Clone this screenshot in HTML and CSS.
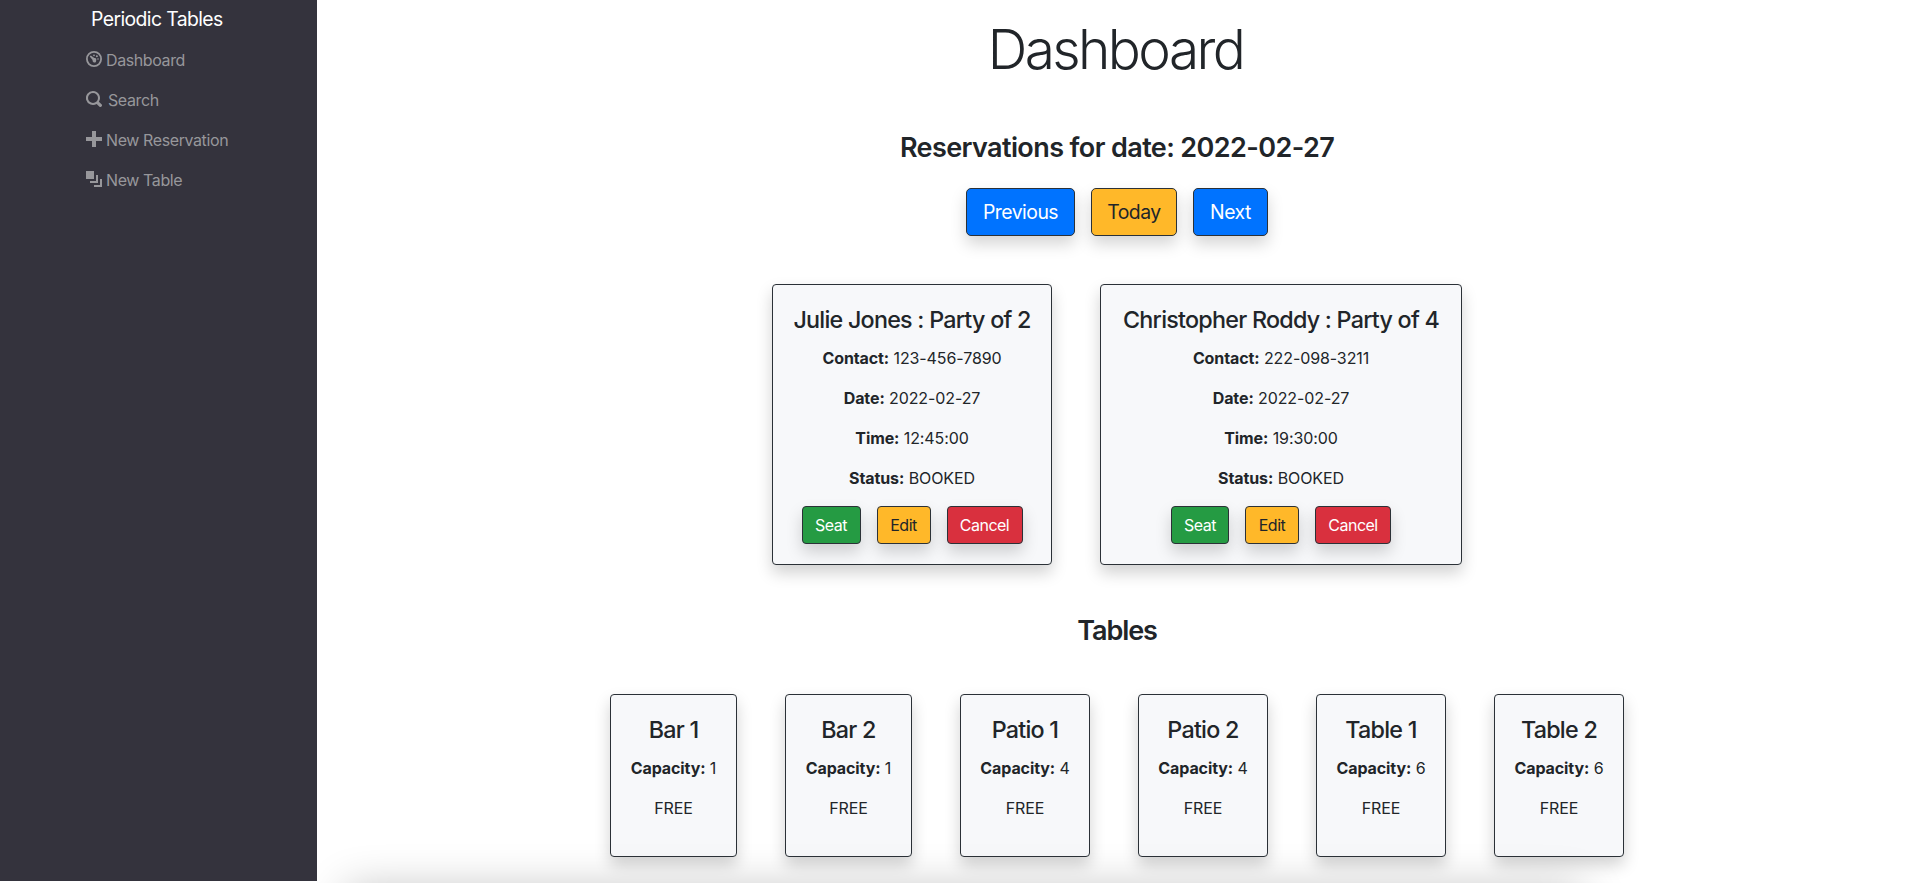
FILE: index.html
```html
<!DOCTYPE html>
<html lang="en">
<head>
<meta charset="utf-8">
<title>Periodic Tables</title>
<link rel="stylesheet" href="styles.css">
</head>
<body>
<div class="layout">
  <nav class="sidebar">
    <a class="brand"><span>Periodic Tables</span></a>
    <ul class="menu">
      <li><svg class="icon" viewBox="0 0 16 16"><path fill-rule="evenodd" d="M8 0a8 8 0 1 0 0 16A8 8 0 0 0 8 0zm0 1.800a6.200 6.200 0 1 1 0 12.400A6.200 6.200 0 0 1 8 1.800z"/><path d="M3.700 5.600 4.800 4.500l3.500 2.600c1-.3 1.900.4 2 1.300l-.3 2.300c-.5.9-1.700 1.100-2.500.6-.8-.5-1.100-1.300-.9-2.200z"/><circle cx="8" cy="4.300" r=".9"/><circle cx="10.900" cy="5.300" r="1"/><circle cx="12" cy="8" r=".8"/></svg><span class="nav-dashboard">Dashboard</span></li>
      <li><svg class="icon" viewBox="0 0 16 16"><path fill-rule="evenodd" d="M7 0a7 7 0 1 0 3.700 12.900l2.500 2.600a1.600 1.600 0 0 0 2.300-2.300l-2.600-2.500A7 7 0 0 0 7 0zm0 2a5 5 0 1 1 0 10A5 5 0 0 1 7 2z"/></svg><span class="nav-search">Search</span></li>
      <li><svg class="icon" viewBox="0 0 16 16"><path d="M6 0h4v6h6v4h-6v6H6v-6H0V6h6z"/></svg><span class="nav-reservation">New Reservation</span></li>
      <li><svg class="icon" viewBox="0 0 16 16"><path d="M0 0h8v8H0zM10 4h2v8H4v-2h6zM14 8h2v8H8v-2h6z"/></svg><span class="nav-table">New Table</span></li>
    </ul>
  </nav>
  <main class="main">
    <h1 class="title">Dashboard</h1>
    <h3 class="subtitle date-title">Reservations for date: 2022-02-27</h3>
    <div class="buttons date-buttons">
      <button class="btn large blue previous">Previous</button>
      <button class="btn large yellow today">Today</button>
      <button class="btn large blue next">Next</button>
    </div>
    <section class="cards">
      <article class="card reservation narrow">
        <h4>Julie Jones : Party of 2</h4>
        <p><b>Contact:</b> 123-456-7890</p>
        <p><b>Date:</b> 2022-02-27</p>
        <p><b>Time:</b> 12:45:00</p>
        <p><b>Status:</b> BOOKED</p>
        <div class="buttons"><button class="btn green seat">Seat</button><button class="btn yellow edit">Edit</button><button class="btn red cancel">Cancel</button></div>
      </article>
      <article class="card reservation wide">
        <h4>Christopher Roddy : Party of 4</h4>
        <p><b>Contact:</b> 222-098-3211</p>
        <p><b>Date:</b> 2022-02-27</p>
        <p><b>Time:</b> 19:30:00</p>
        <p><b>Status:</b> BOOKED</p>
        <div class="buttons"><button class="btn green seat">Seat</button><button class="btn yellow edit">Edit</button><button class="btn red cancel">Cancel</button></div>
      </article>
    </section>
    <h3 class="subtitle tables-title">Tables</h3>
    <section class="cards">
      <article class="card table bar"><h4>Bar 1</h4><p><b>Capacity:</b> 1</p><p>FREE</p></article>
      <article class="card table bar"><h4>Bar 2</h4><p><b>Capacity:</b> 1</p><p>FREE</p></article>
      <article class="card table"><h4>Patio 1</h4><p><b>Capacity:</b> 4</p><p>FREE</p></article>
      <article class="card table"><h4>Patio 2</h4><p><b>Capacity:</b> 4</p><p>FREE</p></article>
      <article class="card table"><h4>Table 1</h4><p><b>Capacity:</b> 6</p><p>FREE</p></article>
      <article class="card table"><h4>Table 2</h4><p><b>Capacity:</b> 6</p><p>FREE</p></article>
    </section>
    <div class="bottom-shade"></div>
  </main>
</div>
</body>
</html>
```
FILE: styles.css
```css
* { box-sizing: border-box; }
body {
  margin: 0;
  overflow: hidden;
  background: #fff;
  color: #212529;
  font: 400 16px/24px Inter, "Liberation Sans", sans-serif;
  letter-spacing: -0.1px;
}
h1, h3, h4, p, ul { margin: 0; padding: 0; }
.layout { display: flex; height: 883px; }
.sidebar {
  flex: none;
  width: 317px;
  height: 881px;
  padding-left: 86px;
  background: #34333d;
}
.brand {
  display: block;
  height: 40px;
  padding: 4px 0 0 5px;
  color: #fff;
  font-size: 19.4px;
  line-height: 30px;
  letter-spacing: -0.6px;
}
.menu { list-style: none; color: #97979b; letter-spacing: -0.4px; }
.menu li { display: flex; height: 40px; padding-top: 8px; white-space: nowrap; }
.icon { flex: none; width: 16px; height: 16px; margin: 3px 4px 0 0; fill: currentColor; }
.menu .nav-search { padding-left: 2px; }
.main {
  position: relative;
  flex: 1;
  height: 883px;
  padding-left: 4px;
  overflow: hidden;
  text-align: center;
}
.title {
  height: 67px;
  margin-top: 16px;
  padding-right: 3px;
  font-size: 55px;
  font-weight: 330;
  line-height: 67px;
  letter-spacing: -2.6px;
}
.subtitle {
  height: 34px;
  font-size: 27px;
  font-weight: 600;
  line-height: 34px;
  letter-spacing: -0.6px;
}
.date-title { margin-top: 48px; }
.date-buttons { margin: 23px 0 48px; }
.buttons { display: flex; justify-content: center; gap: 16px; }
.btn {
  height: 38px;
  padding: 0;
  border: 1px solid #2b3137;
  border-radius: 4px;
  font: inherit;
  letter-spacing: -0.5px;
  color: #fff;
  box-shadow: 0 8px 16px rgba(0, 0, 0, .17);
}
.large { height: 48px; font-size: 19.4px; border-radius: 5px; }
.blue { background: #0073ff; }
.yellow { background: #ffb829; color: #212529; }
.green { background: #259b43; }
.red { background: #d9303e; }
.previous { width: 109px; }
.today { width: 86px; }
.next { width: 75px; }
.seat { width: 59px; }
.wide .seat { width: 58px; }
.edit { width: 54px; }
.cancel { width: 76px; }
.cards { display: flex; justify-content: center; gap: 48px; }
.card {
  padding-top: 20px;
  border: 1px solid #2b3137;
  border-radius: 4px;
  background: #f7f8fa;
  box-shadow: 0 8px 16px rgba(0, 0, 0, .18);
  white-space: nowrap;
}
.card h4 {
  height: 29px;
  margin-bottom: 12px;
  font-size: 23.3px;
  font-weight: 550;
  line-height: 29px;
  letter-spacing: -0.75px;
}
.card p { height: 24px; margin-bottom: 16px; }
.reservation { height: 281px; }
.narrow { width: 280px; }
.wide { width: 362px; }
.tables-title { margin: 49px 0 46px; letter-spacing: -1.1px; }
.table { width: 130px; height: 163px; }
.bar { width: 127px; }
.bottom-shade {
  position: absolute;
  top: 894px;
  left: 35px;
  width: 1225px;
  height: 60px;
  box-shadow: 0 0 44px 6px rgba(0, 0, 0, .24);
}
```
